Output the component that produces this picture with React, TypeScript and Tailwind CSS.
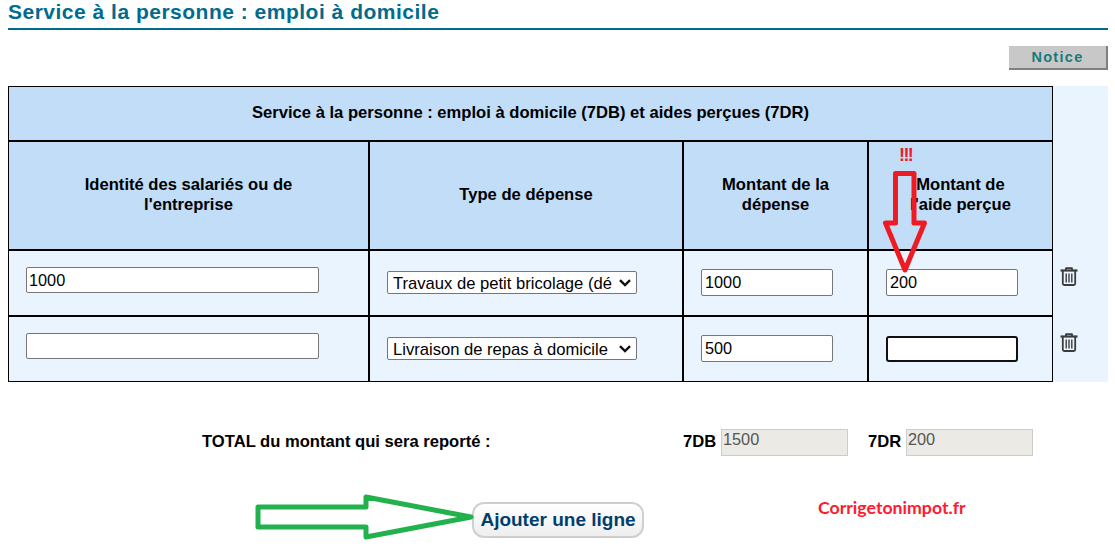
import React from 'react'

const inputBox = 'block h-[27px] bg-white border border-[#767676] rounded-[2px] px-[3px] text-[16.3px] text-black outline-none'
const selectBox = 'block h-[23px] w-[250px] appearance-none bg-white border border-[#767676] rounded-[2px] pl-[5px] pr-[24px] pb-[1px] text-[16.6px] text-black outline-none'
const headCell = 'bg-[#C2DDF7] flex items-center justify-center text-center font-bold text-[16.6px] leading-[20px] text-black pb-[2px]'

const Trash = () => (
  <svg width="18" height="19" viewBox="0 0 18 19" fill="none" stroke="#3C3C3C" strokeWidth="1.8" strokeLinejoin="round">
    <path d="M0.5 3.5H17.5" strokeWidth="2.2" />
    <path d="M6 3V1.2H12V3" />
    <path d="M2.8 4V16.5Q2.8 18 4.3 18H13.7Q15.2 18 15.2 16.5V4" />
    <path d="M6.2 6.5V15.5M9 6.5V15.5M11.8 6.5V15.5" strokeWidth="1.4" />
  </svg>
)

const Select = ({ value, label }: { value: string; label: string }) => (
  <div className="relative w-[250px]">
    <select className={selectBox} defaultValue={value}>
      <option value={value}>{label}</option>
    </select>
    <svg className="absolute right-[6px] top-[8px] pointer-events-none" width="12" height="8" viewBox="0 0 12 8" fill="none" stroke="#111" strokeWidth="2.4">
      <path d="M1 1.2L6 6L11 1.2" />
    </svg>
  </div>
)

const App = () => {
  return (
    <div className="relative w-[1115px] h-[550px] overflow-hidden bg-white px-2 font-['Liberation_Sans',Arial,sans-serif]">
      <h1 className="h-[30px] border-b-2 border-[#006B8F] text-[21px] leading-[23px] font-bold tracking-[0.5px] text-[#006B8F] w-[1100px]">
        Service à la personne : emploi à domicile
      </h1>

      <div className="flex justify-end w-[1100px] mt-4">
        <button className="w-[99px] h-[24px] pt-px bg-[#C8C8C8] border-r-2 border-b-2 border-[#808080] text-[14.5px] font-bold tracking-[1.3px] text-[#1A7A7A]">
          Notice
        </button>
      </div>

      <div className="flex w-[1100px] mt-4">
        <div className="grid w-[1045px] grid-cols-[359px_312px_183px_183px] grid-rows-[53px_107px_64px_64px] gap-[2px] p-[1px] bg-black">
          <div className={`${headCell} col-span-4`}>
            Service à la personne : emploi à domicile (7DB) et aides perçues (7DR)
          </div>
          <div className={`${headCell} px-12`}>Identité des salariés ou de l'entreprise</div>
          <div className={headCell}>Type de dépense</div>
          <div className={`${headCell} px-8`}>Montant de la dépense</div>
          <div className={`${headCell} px-8`}>Montant de l'aide perçue</div>

          <div className="bg-[#EAF4FE] pt-4 pl-[17px]">
            <input className={`${inputBox} w-[293px] !h-[26px] !px-[2px]`} defaultValue="1000" />
          </div>
          <div className="bg-[#EAF4FE] pt-5 pl-[17px]">
            <Select value="a" label="Travaux de petit bricolage (dépannage)" />
          </div>
          <div className="bg-[#EAF4FE] pt-[18px] pl-[17px]">
            <input className={`${inputBox} w-[132px]`} defaultValue="1000" />
          </div>
          <div className="bg-[#EAF4FE] pt-[18px] pl-[17px]">
            <input className={`${inputBox} w-[132px]`} defaultValue="200" />
          </div>

          <div className="bg-[#EAF4FE] pt-4 pl-[17px]">
            <input className={`${inputBox} w-[293px] !h-[26px]`} />
          </div>
          <div className="bg-[#EAF4FE] pt-5 pl-[17px]">
            <Select value="b" label="Livraison de repas à domicile" />
          </div>
          <div className="bg-[#EAF4FE] pt-[18px] pl-[17px]">
            <input className={`${inputBox} w-[132px]`} defaultValue="500" />
          </div>
          <div className="bg-[#EAF4FE] pt-[19px] pl-[17px]">
            <input className="block h-[26px] w-[132px] bg-white border-2 border-[#111] rounded-[3px]" />
          </div>
        </div>

        <div className="flex-1 bg-[#EAF4FE] pt-[181px] pl-[7px] flex flex-col gap-[47px]">
          <Trash />
          <Trash />
        </div>
      </div>

      <div className="flex items-center mt-[47px] h-[27px] text-[16.6px] font-bold text-black">
        <span className="ml-[194px] w-[481px]">TOTAL du montant qui sera reporté :</span>
        <span className="w-[38px]">7DB</span>
        <div className="w-[127px] h-[27px] bg-[#EBEAE4] border border-[#CCC] px-px text-[16.3px] text-[#555] font-normal leading-[18px]">1500</div>
        <span className="ml-5 w-[38px]">7DR</span>
        <div className="w-[127px] h-[27px] bg-[#EBEAE4] border border-[#CCC] px-px text-[16.3px] text-[#555] font-normal leading-[18px]">200</div>
      </div>

      <div className="flex items-center mt-[46px]">
        <button className="ml-[464px] w-[172px] h-[36px] rounded-[12px] border-2 border-[#CFCFCF] bg-gradient-to-b from-white to-[#EEE] text-[19px] font-bold text-[#003E6E]">
          Ajouter une ligne
        </button>
        <span className="ml-[174px] -mt-6 text-[17.7px] font-bold text-[#FF1A2E] font-['Lato',sans-serif]">Corrigetonimpot.fr</span>
      </div>

      <span className="absolute left-[899px] top-[146px] text-[18px] leading-[18px] tracking-[-1.6px] font-bold text-[#ED1C24]">!!!</span>

      <svg className="absolute left-0 top-0 pointer-events-none" width="1115" height="550" fill="none">
        <path d="M895.5 173.5H914V223H924.5L905 270L885.5 223H895.5Z" stroke="#ED1C24" strokeWidth="5" strokeLinejoin="round" />
        <path d="M258 507H366V497L471 517L366 537V527H258Z" stroke="#22B14C" strokeWidth="5" strokeLinejoin="round" />
      </svg>
    </div>
  )
}

export default App
